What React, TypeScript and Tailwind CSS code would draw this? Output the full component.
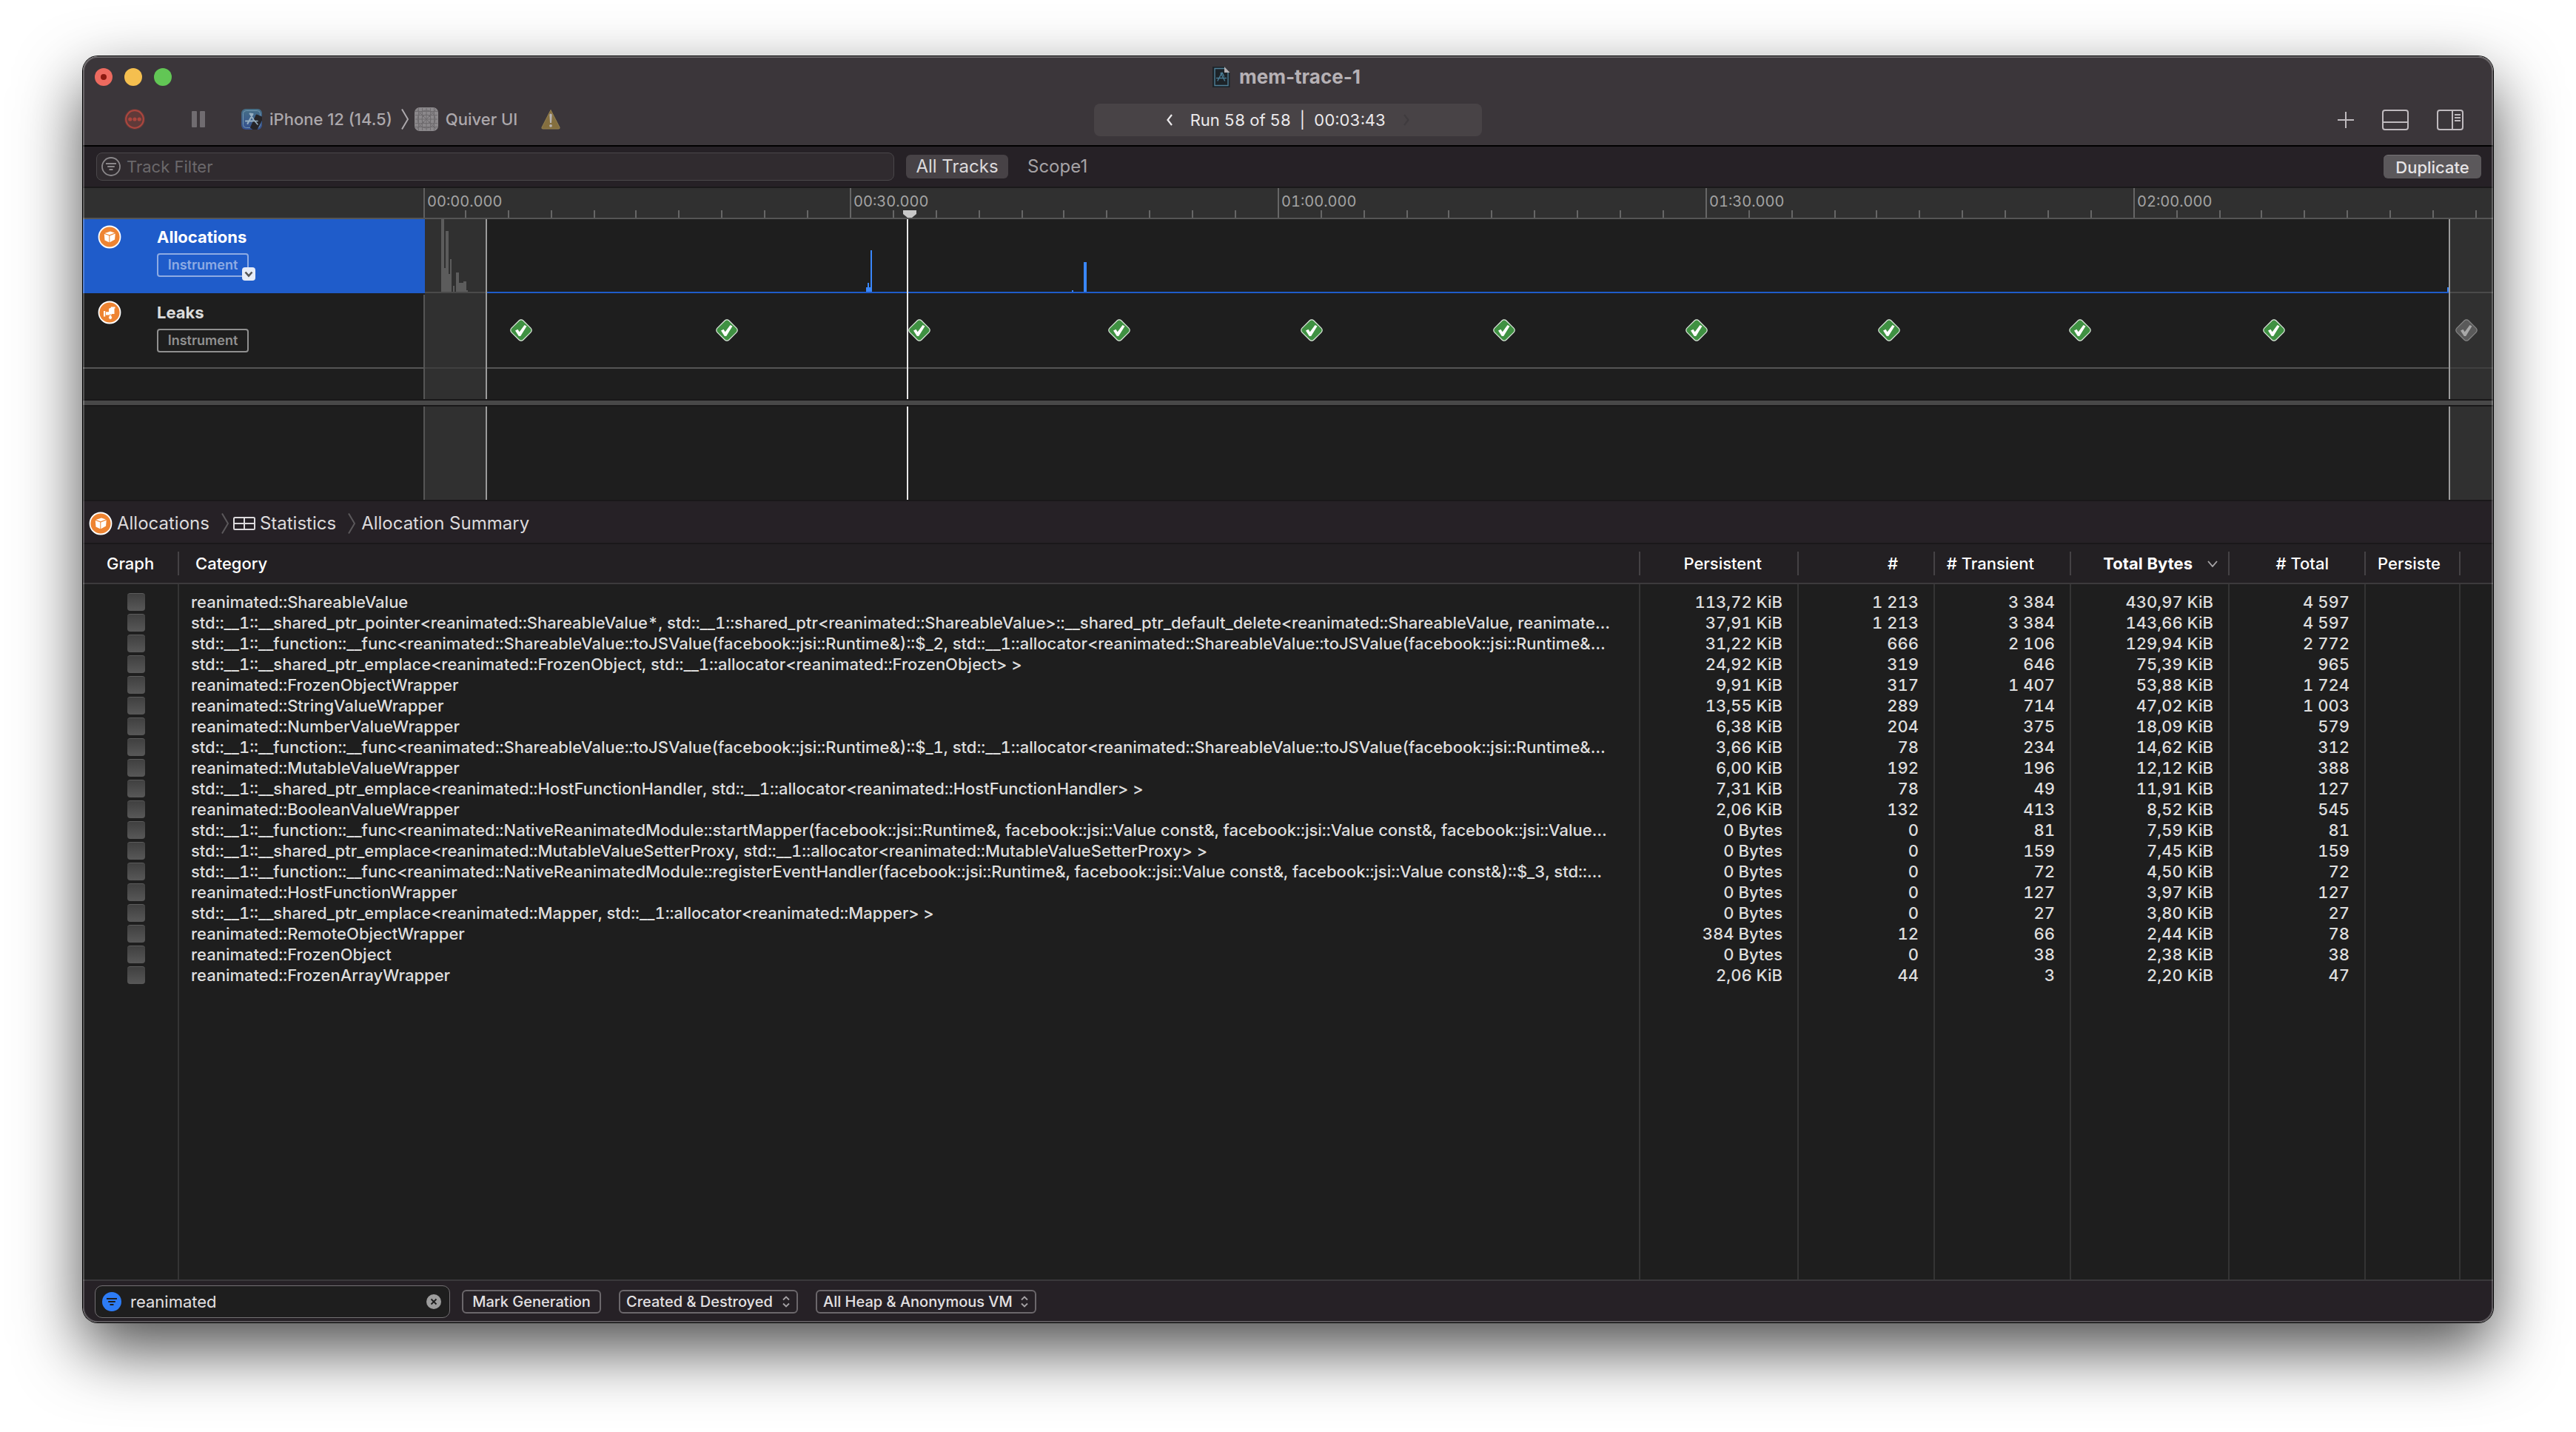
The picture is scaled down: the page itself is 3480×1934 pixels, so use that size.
import React from "react";

// timeline geometry: one tick every 3 seconds, origin at the left edge of the canvas
const TICK_WIDTH = 57.79;
const TICK_ORIGIN = -4;
const RANGE_START = 82;
const RANGE_END = 2734;

const ticks = Array.from({ length: 48 }, (_, i) => ({
  x: Math.round((TICK_ORIGIN + (i + 1) * TICK_WIDTH) / 2) * 2,
  major: (i + 1) % 10 === 0,
}));

const rulerLabels = [
  { x: 3, text: "00:00.000" },
  { x: 579, text: "00:30.000" },
  { x: 1157, text: "01:00.000" },
  { x: 1735, text: "01:30.000" },
  { x: 2313, text: "02:00.000" },
];

// [x, width, height]
const inactiveBars = [
  [22, 4, 98],
  [26, 2, 32],
  [28, 4, 82],
  [32, 2, 24],
  [34, 2, 44],
  [38, 2, 8],
  [42, 4, 26],
  [46, 6, 12],
  [52, 4, 14],
  [56, 2, 2],
];

const activeBars = [
  [596, 2, 6],
  [598, 2, 12],
  [600, 2, 6],
  [602, 2, 56],
  [874, 2, 2],
  [890, 4, 40],
  [2732, 2, 6],
];

const leakChecks = [130, 408, 668, 938, 1198, 1458, 1718, 1978, 2236, 2498];

const rows = [
  ["reanimated::ShareableValue", "113,72 KiB", "1 213", "3 384", "430,97 KiB", "4 597"],
  [
    "std::__1::__shared_ptr_pointer<reanimated::ShareableValue*, std::__1::shared_ptr<reanimated::ShareableValue>::__shared_ptr_default_delete<reanimated::ShareableValue, reanimate…",
    "37,91 KiB", "1 213", "3 384", "143,66 KiB", "4 597",
  ],
  [
    "std::__1::__function::__func<reanimated::ShareableValue::toJSValue(facebook::jsi::Runtime&)::$_2, std::__1::allocator<reanimated::ShareableValue::toJSValue(facebook::jsi::Runtime&…",
    "31,22 KiB", "666", "2 106", "129,94 KiB", "2 772",
  ],
  [
    "std::__1::__shared_ptr_emplace<reanimated::FrozenObject, std::__1::allocator<reanimated::FrozenObject> >",
    "24,92 KiB", "319", "646", "75,39 KiB", "965",
  ],
  ["reanimated::FrozenObjectWrapper", "9,91 KiB", "317", "1 407", "53,88 KiB", "1 724"],
  ["reanimated::StringValueWrapper", "13,55 KiB", "289", "714", "47,02 KiB", "1 003"],
  ["reanimated::NumberValueWrapper", "6,38 KiB", "204", "375", "18,09 KiB", "579"],
  [
    "std::__1::__function::__func<reanimated::ShareableValue::toJSValue(facebook::jsi::Runtime&)::$_1, std::__1::allocator<reanimated::ShareableValue::toJSValue(facebook::jsi::Runtime&…",
    "3,66 KiB", "78", "234", "14,62 KiB", "312",
  ],
  ["reanimated::MutableValueWrapper", "6,00 KiB", "192", "196", "12,12 KiB", "388"],
  [
    "std::__1::__shared_ptr_emplace<reanimated::HostFunctionHandler, std::__1::allocator<reanimated::HostFunctionHandler> >",
    "7,31 KiB", "78", "49", "11,91 KiB", "127",
  ],
  ["reanimated::BooleanValueWrapper", "2,06 KiB", "132", "413", "8,52 KiB", "545"],
  [
    "std::__1::__function::__func<reanimated::NativeReanimatedModule::startMapper(facebook::jsi::Runtime&, facebook::jsi::Value const&, facebook::jsi::Value const&, facebook::jsi::Value…",
    "0 Bytes", "0", "81", "7,59 KiB", "81",
  ],
  [
    "std::__1::__shared_ptr_emplace<reanimated::MutableValueSetterProxy, std::__1::allocator<reanimated::MutableValueSetterProxy> >",
    "0 Bytes", "0", "159", "7,45 KiB", "159",
  ],
  [
    "std::__1::__function::__func<reanimated::NativeReanimatedModule::registerEventHandler(facebook::jsi::Runtime&, facebook::jsi::Value const&, facebook::jsi::Value const&)::$_3, std::…",
    "0 Bytes", "0", "72", "4,50 KiB", "72",
  ],
  ["reanimated::HostFunctionWrapper", "0 Bytes", "0", "127", "3,97 KiB", "127"],
  [
    "std::__1::__shared_ptr_emplace<reanimated::Mapper, std::__1::allocator<reanimated::Mapper> >",
    "0 Bytes", "0", "27", "3,80 KiB", "27",
  ],
  ["reanimated::RemoteObjectWrapper", "384 Bytes", "12", "66", "2,44 KiB", "78"],
  ["reanimated::FrozenObject", "0 Bytes", "0", "38", "2,38 KiB", "38"],
  ["reanimated::FrozenArrayWrapper", "2,06 KiB", "44", "3", "2,20 KiB", "47"],
];

const TraceDocIcon = () => (
  <svg className="h-7 w-6" viewBox="0 0 24 28">
    <path d="M0 0h16.500l7 8v20H0z" fill="#1d2328" />
    <path d="M16 2.500H3v23h18V8" fill="none" stroke="#4f7f96" strokeWidth="1.400" />
    <path d="M16 0l7.500 8H16z" fill="#b5b2b5" />
    <path d="M12.500 8.500L7 19M11 8.500l5.500 10.500M5.500 15.500h13M13 8l2.500 5" fill="none" stroke="#4a7c94" strokeWidth="1.400" strokeLinecap="round" />
  </svg>
);

const SimulatorIcon = () => (
  <svg className="h-7 w-7" viewBox="0 0 28 28">
    <defs>
      <linearGradient id="sim" x1="0" y1="0" x2="0" y2="1">
        <stop offset="0" stopColor="#466f86" />
        <stop offset="1" stopColor="#344f8f" />
      </linearGradient>
    </defs>
    <rect width="28" height="28" rx="6" fill="url(#sim)" />
    <rect x="2.500" y="2.500" width="23" height="23" rx="4" fill="none" stroke="#7196b0" strokeWidth="1" />
    <path d="M12 7l3 5 5 8M15.500 7L8.500 20M6 16.500h16M11.500 6.500l4 .5" fill="none" stroke="#96afc2" strokeWidth="2" strokeLinecap="round" />
    <path d="M19.500 8.500q.7-1.300 2-.8L28 10.500v5L21.500 28h-6l-3.700-2.500z" fill="#252428" />
    <path d="M16.500 14.500l5.500 6.500M14 16.500h8" stroke="#96afc2" strokeWidth="1.600" strokeLinecap="round" />
  </svg>
);

const AppPlaceholderIcon = () => (
  <svg className="h-8 w-8" viewBox="0 0 32 32">
    <rect width="32" height="32" rx="7" fill="#8b888b" />
    <g fill="none" stroke="#6f6c6f" strokeWidth="1">
      <path d="M5.500 1v30M10.500 1v30M16 1v30M21.500 1v30M26.500 1v30M1 5.500h30M1 10.500h30M1 16h30M1 21.500h30M1 26.500h30M3 3l26 26M29 3L3 29" />
      <circle cx="16" cy="16" r="12" />
      <circle cx="16" cy="16" r="6" />
    </g>
  </svg>
);

const AllocationsIcon = () => (
  <svg className="h-8 w-8" viewBox="0 0 32 32">
    <circle cx="16" cy="16" r="14.500" fill="#ee8432" stroke="#fff" strokeWidth="1.800" />
    <path d="M17 8.500l6 2-7 2.700-6.500-2.200z" fill="#fff" />
    <path d="M8.800 12l6.500 2.200v9L9.500 20.500z" fill="#fff" />
    <path d="M23.700 11.500l-7.400 2.900v8.800l6.800-3.600z" fill="#fff" />
  </svg>
);

const LeaksIcon = () => (
  <svg className="h-8 w-8" viewBox="0 0 32 32">
    <circle cx="16" cy="16" r="14.500" fill="#ee8432" stroke="#fff" strokeWidth="1.800" />
    <path d="M8 14h2.200v7.500H8zM11 15.200h4V11h-.1l3-1.500V8.500h5.600v2h-1V18h-3.800v1.500H11z" fill="#fff" />
    <path d="M17 18.500c1.600 2 2.500 3.300 2.500 4.500a2.400 2.400 0 0 1-4.800 0c0-1.200.8-2.500 2.300-4.500z" fill="#fff" stroke="#ee8432" strokeWidth=".8" />
  </svg>
);

const FilterIcon = ({ active = false }: { active?: boolean }) => (
  <svg className="h-[26px] w-[26px] shrink-0" viewBox="0 0 26 26">
    {active ? (
      <circle cx="13" cy="13" r="13" fill="#2d7cf6" />
    ) : (
      <circle cx="13" cy="13" r="12" fill="none" stroke="#8a878a" strokeWidth="1.800" />
    )}
    <path d="M6 9h14M8.200 13h9.600M10.500 17h5" stroke={active ? "#1e1e1e" : "#8a878a"} strokeWidth="2" />
  </svg>
);

const Crumb = ({ className }: { className: string }) => (
  <svg className={className} viewBox="0 0 10 28">
    <path d="M1 0.500l8 13.500-8 13.500" fill="none" stroke="currentColor" strokeWidth="2" />
  </svg>
);

const UpDown = () => (
  <svg className="pointer-events-none absolute right-[10px] top-2 h-4 w-3" viewBox="0 0 12 16">
    <path d="M2 5.500L6 1.500l4 4M2 10.500l4 4 4-4" fill="none" stroke="#a5a2a5" strokeWidth="1.800" />
  </svg>
);

const LeakCheck = ({ x, inactive = false }: { x: number; inactive?: boolean }) => (
  <g transform={`translate(${x} 150)`}>
    <rect
      x="-11.200"
      y="-11.200"
      width="22.400"
      height="22.400"
      rx="4"
      transform="rotate(45)"
      fill={inactive ? "#5a5a5a" : "#3f9142"}
      stroke={inactive ? "#858585" : "#dfe8df"}
      strokeWidth="1.200"
    />
    <path d="M-8 .5l3.500-1.800 2.200 3.500L4.500-7l3 1.500L-.8 8h-2.400z" fill={inactive ? "#a8a8a8" : "#fff"} />
  </g>
);

const RangeShade = () => (
  <>
    <div className="absolute inset-y-0 left-0 w-[82px] bg-[#383838]/70" />
    <div className="absolute inset-y-0 left-[82px] w-0.5 bg-[#9a9a9a]" />
    <div className="absolute inset-y-0 left-[2734px] right-0 border-l-2 border-[#9a9a9a] bg-[#383838]/70" />
  </>
);

const HeaderCell = ({ children, className = "" }: { children?: React.ReactNode; className?: string }) => (
  <th className="h-[54px] border-b-2 border-[#3c3a3c] bg-[#232023] p-0 font-medium">
    <div className={`flex h-8 items-center overflow-hidden border-r-2 border-[#454245] whitespace-nowrap ${className}`}>
      {children}
    </div>
  </th>
);

const TitleBar = () => (
  <header className="border-b-2 border-black bg-[#3b363a]">
    <div className="grid h-14 grid-cols-[1fr_auto_1fr] items-center px-4">
      <div className="flex gap-4">
        <button aria-label="Close" className="flex size-6 items-center justify-center rounded-full bg-[#ed6a5f]">
          <span className="size-2 rounded-full bg-[#8c1a10]" />
        </button>
        <button aria-label="Minimize" className="size-6 rounded-full bg-[#f5bf4f]" />
        <button aria-label="Zoom" className="size-6 rounded-full bg-[#62c655]" />
      </div>
      <div className="flex items-center gap-3 pr-1">
        <TraceDocIcon />
        <h1 className="text-[26px] leading-8 font-bold text-[#b6b1b5]">mem-trace-1</h1>
      </div>
      <div />
    </div>

    <div className="grid h-16 grid-cols-[1fr_524px_1fr] items-center pb-1 text-[22px] leading-8">
      <div className="flex items-center pb-0.5 pl-14 text-[#aca8ac]">
        <button aria-label="Stop recording">
          <svg className="size-7" viewBox="0 0 28 28">
            <circle cx="14" cy="14" r="14" fill="#57393a" />
            <circle cx="14" cy="14" r="11.800" fill="#5f3a39" stroke="#ab463e" strokeWidth="2.200" />
            <circle cx="7.800" cy="14" r="2.600" fill="#ab463e" />
            <circle cx="14" cy="14" r="2.600" fill="#ab463e" />
            <circle cx="20.200" cy="14" r="2.600" fill="#ab463e" />
          </svg>
        </button>
        <button aria-label="Pause" className="ml-[63px] flex gap-1">
          <span className="h-[22px] w-[7px] rounded-[1px] bg-[#706c70]" />
          <span className="h-[22px] w-[7px] rounded-[1px] bg-[#706c70]" />
        </button>
        <button className="ml-[49px] flex items-center gap-[10px] font-medium">
          <SimulatorIcon />
          iPhone 12 (14.5)
        </button>
        <Crumb className="ml-3 h-7 w-[10px]" />
        <button className="ml-2 flex items-center gap-[10px] font-medium">
          <AppPlaceholderIcon />
          Quiver UI
        </button>
        <svg className="ml-8 h-7 w-[26px]" viewBox="0 0 26 28">
          <path d="M13 1.500L25 25a1.500 1.500 0 0 1-1.400 2H2.400A1.500 1.500 0 0 1 1 25z" fill="#856f3f" stroke="#94804e" strokeWidth="1" />
          <path d="M11.300 8q0-1.600 1.700-1.600T14.700 8l-.7 11h-2z" fill="#b8b4b4" />
          <circle cx="13" cy="22.800" r="1.900" fill="#b8b4b4" />
        </svg>
      </div>
      <div className="flex h-11 items-center justify-center gap-6 rounded-lg bg-[#484346] text-[#eceaec] tabular-nums">
        <button aria-label="Previous run">
          <svg className="h-4 w-2" viewBox="0 0 8 16">
            <path d="M7 1L1.500 8 7 15" fill="none" stroke="currentColor" strokeWidth="2.200" />
          </svg>
        </button>
        <span className="whitespace-pre">Run 58 of 58  |  00:03:43</span>
        <button aria-label="Next run" disabled className="text-[#3f3b3e]">
          <svg className="h-4 w-2" viewBox="0 0 8 16">
            <path d="M1 1l5.500 7L1 15" fill="none" stroke="currentColor" strokeWidth="2.200" />
          </svg>
        </button>
      </div>
      <div className="flex items-center justify-end gap-[38px] pr-10 text-[#bfbabe]">
        <button aria-label="Add instrument">
          <svg className="size-[22px]" viewBox="0 0 22 22">
            <path d="M11 0v22M0 11h22" stroke="currentColor" strokeWidth="2" />
          </svg>
        </button>
        <button aria-label="Toggle detail area">
          <svg className="h-7 w-9" viewBox="0 0 36 28">
            <rect x="1" y="1" width="34" height="26" rx="3" fill="none" stroke="currentColor" strokeWidth="2" />
            <path d="M1 17h34" stroke="currentColor" strokeWidth="2" />
          </svg>
        </button>
        <button aria-label="Toggle inspector">
          <svg className="h-7 w-9" viewBox="0 0 36 28">
            <rect x="1" y="1" width="34" height="26" rx="3" fill="none" stroke="currentColor" strokeWidth="2" />
            <path d="M21 1v26M24 7h8M24 11h8M24 15h8" stroke="currentColor" strokeWidth="2" />
          </svg>
        </button>
      </div>
    </div>
  </header>
);

const TrackFilterBar = () => (
  <div className="flex h-14 items-center border-b-2 border-[#1b191b] bg-[#262126] pr-4 pl-[18px] text-[24px] leading-8">
    <label className="flex h-[38px] w-[1078px] items-center gap-2 rounded-lg border border-[#4a474a] bg-[#302b2f] pl-[6px]">
      <FilterIcon />
      <input
        type="text"
        aria-label="Track Filter"
        placeholder="Track Filter"
        className="flex-1 bg-transparent text-[22px] outline-none placeholder:text-[#6b686b]"
      />
    </label>
    <button className="ml-4 h-8 w-[138px] rounded-md bg-[#474246] text-[#dcdadc]">All Tracks</button>
    <button className="ml-[26px] text-[#a5a2a5]">Scope1</button>
    <button className="ml-auto h-8 w-[132px] rounded-md border-t border-[#757275] bg-[#5b585b] text-[22px] leading-7 font-medium text-[#e6e4e6]">
      Duplicate
    </button>
  </div>
);

const Timeline = () => (
  <section>
    <div className="grid h-[42px] grid-cols-[462px_1fr] border-b-2 border-[#555] bg-[#303030]">
      <div className="border-r-2 border-[#5f5f5f]" />
      <div className="relative overflow-hidden text-[20px] leading-9 text-[#a3a3a3] tabular-nums">
        <svg className="absolute inset-0 h-full w-full">
          {ticks.map(({ x, major }) => (
            <rect key={x} x={x} y={major ? 0 : 30} width="2" height={major ? 40 : 10} fill="#666" />
          ))}
          <path d="M646 30h18v5l-6 5h-6l-6-5z" fill="#c8c8c8" />
        </svg>
        {rulerLabels.map(({ x, text }) => (
          <span key={text} className="absolute top-0" style={{ left: x }}>
            {text}
          </span>
        ))}
      </div>
    </div>

    <div className="grid h-[243px] grid-cols-[462px_1fr] bg-[#1e1e1e]">
      <div className="flex flex-col gap-0.5 text-[22px] leading-8 font-bold">
        <div className="flex h-[100px] items-start gap-12 bg-[#1f5cca] pt-2 pl-5 text-white">
          <AllocationsIcon />
          <div>
            <h2>Allocations</h2>
            <div className="relative mt-[6px] flex h-8 w-[124px] items-center justify-center rounded-sm border-2 border-[#8eabe3] text-[18px] font-semibold text-[#8eabe3]">
              Instrument
              <button
                aria-label="Choose detail"
                className="absolute -right-[11px] -bottom-[7px] flex size-[18px] items-center justify-center rounded bg-[#e6ebf7]"
              >
                <svg className="size-3" viewBox="0 0 12 12">
                  <path d="M1.500 3.500L6 8.500l4.500-5" fill="none" stroke="#555" strokeWidth="2.600" />
                </svg>
              </button>
            </div>
          </div>
        </div>
        <div className="flex h-[100px] items-start gap-12 border-r-2 border-b-2 border-[#555] pt-2 pl-5 text-[#dcdcdc]">
          <LeaksIcon />
          <div>
            <h2>Leaks</h2>
            <div className="mt-[6px] flex h-8 w-[124px] items-center justify-center rounded-sm border-2 border-[#909090] text-[18px] font-semibold text-[#909090]">
              Instrument
            </div>
          </div>
        </div>
        <div className="-mt-0.5 flex-1 border-r-2 border-[#555]" />
      </div>
      <div className="relative overflow-hidden">
        <div className="absolute inset-x-0 top-[200px] h-0.5 bg-[#555]" />
        <RangeShade />
        <svg className="absolute inset-0 h-full w-full">
          <rect x="0" y="98" width={RANGE_START} height="2" fill="#4a4a4a" />
          <rect x={RANGE_END + 2} y="98" width="100%" height="2" fill="#4a4a4a" />
          <rect x={RANGE_START + 2} y="98" width={RANGE_END - RANGE_START - 2} height="2" fill="#1f5cca" />
          {inactiveBars.map(([x, w, h]) => (
            <rect key={x} x={x} y={98 - h} width={w} height={h} fill="#5c5c5c" />
          ))}
          {activeBars.map(([x, w, h]) => (
            <rect key={x} x={x} y={98 - h} width={w} height={h} fill="#3a87fb" />
          ))}
          {leakChecks.map((x) => (
            <LeakCheck key={x} x={x} />
          ))}
          <LeakCheck x={2758} inactive />
        </svg>
        <div className="absolute inset-y-0 left-[651px] w-0.5 bg-[#e8e8e8]" />
      </div>
    </div>

    <div className="h-[10px] border-y-2 border-[#191819] bg-[#484848]" />

    <div className="grid h-32 grid-cols-[462px_1fr] border-b-2 border-[#1a181a] bg-[#1e1e1e]">
      <div className="border-r-2 border-[#555]" />
      <div className="relative overflow-hidden">
        <RangeShade />
        <div className="absolute inset-y-0 left-[651px] w-0.5 bg-[#e8e8e8]" />
      </div>
    </div>
  </section>
);

const Breadcrumbs = () => (
  <nav className="flex h-[58px] items-center border-b-2 border-[#1a181a] bg-[#262126] pt-1 pl-2 text-[24px] leading-8 text-[#dcdadc]">
    <a href="#allocations" className="flex items-center gap-[6px]">
      <AllocationsIcon />
      Allocations
    </a>
    <Crumb className="ml-4 h-7 w-[10px] text-[#5b585b]" />
    <a href="#statistics" className="ml-[6px] flex items-center gap-[6px]">
      <svg className="h-[18px] w-[30px]" viewBox="0 0 30 18">
        <rect x="1" y="1" width="28" height="16" rx="1.500" fill="none" stroke="currentColor" strokeWidth="2" />
        <path d="M15 1v16M1 9h28" stroke="currentColor" strokeWidth="2" />
      </svg>
      Statistics
    </a>
    <Crumb className="ml-4 h-7 w-[10px] text-[#5b585b]" />
    <a href="#summary" className="ml-2">
      Allocation Summary
    </a>
  </nav>
);

const AllocationsTable = () => (
  <div className="min-h-0 flex-1 overflow-hidden bg-[#1e1e1e]">
    <table className="h-full w-full table-fixed border-separate border-spacing-0 text-[22px] leading-7 font-medium text-[#dedede] tabular-nums">
      <colgroup>
        <col className="w-[130px]" />
        <col />
        <col className="w-[214px]" />
        <col className="w-[184px]" />
        <col className="w-[184px]" />
        <col className="w-[214px]" />
        <col className="w-[184px]" />
        <col className="w-[128px]" />
        <col className="w-[44px]" />
      </colgroup>
      <thead className="text-white">
        <tr>
          <HeaderCell className="pl-8">Graph</HeaderCell>
          <HeaderCell className="pl-[22px]">Category</HeaderCell>
          <HeaderCell className="justify-end pr-[48px]">Persistent</HeaderCell>
          <HeaderCell className="justify-end pr-[48px]">#</HeaderCell>
          <HeaderCell className="justify-end pr-[48px]"># Transient</HeaderCell>
          <HeaderCell className="justify-end gap-5 pr-[14px]">
            <span className="font-bold">Total Bytes</span>
            <svg className="h-[9px] w-[14px]" viewBox="0 0 14 9">
              <path d="M1 1l6 7 6-7" fill="none" stroke="#a8a5a8" strokeWidth="1.800" />
            </svg>
          </HeaderCell>
          <HeaderCell className="justify-end pr-[48px]"># Total</HeaderCell>
          <HeaderCell className="pl-4">Persiste</HeaderCell>
          <th className="border-b-2 border-[#3c3a3c] bg-[#232023]" />
        </tr>
      </thead>
      <tbody>
        <tr className="h-[10px]">
          {Array.from({ length: 8 }, (_, i) => (
            <td key={i} className="border-r-2 border-[#343434] p-0" />
          ))}
          <td className="p-0" />
        </tr>
        {rows.map(([category, ...values]) => (
          <tr key={category} className="h-7">
            <td className="border-r-2 border-[#343434] p-0 pl-[60px]">
              <input
                type="checkbox"
                aria-label={`Graph ${category}`}
                className="block size-6 appearance-none rounded border-t border-[#5c5c5c] bg-linear-to-b from-[#404040] to-[#585858]"
              />
            </td>
            <td className="overflow-hidden border-r-2 border-[#343434] p-0 pl-4 whitespace-nowrap">{category}</td>
            {values.map((value, i) => (
              <td key={i} className="border-r-2 border-[#343434] p-0 pr-5 text-right whitespace-nowrap">
                {value}
              </td>
            ))}
            <td className="border-r-2 border-[#343434] p-0" />
            <td className="p-0" />
          </tr>
        ))}
        {/* empty space under the last row keeps the column rules */}
        <tr>
          {Array.from({ length: 8 }, (_, i) => (
            <td key={i} className="border-r-2 border-[#343434] p-0" />
          ))}
          <td className="p-0" />
        </tr>
      </tbody>
    </table>
  </div>
);

const BottomBar = () => (
  <footer className="flex h-[58px] items-center border-t-2 border-[#3a383b] bg-[#262126] pl-4 text-[20px] leading-7 text-[#e2e0e2]">
    <label className="flex h-11 w-[480px] items-center gap-3 rounded-[10px] border border-[#737073] bg-[#1e1e1e] pr-[11px] pl-[9px]">
      <FilterIcon active />
      <input
        type="text"
        aria-label="Detail filter"
        defaultValue="reanimated"
        className="min-w-0 flex-1 bg-transparent text-[22px] outline-none"
      />
      <button aria-label="Clear filter">
        <svg className="size-5" viewBox="0 0 20 20">
          <circle cx="10" cy="10" r="10" fill="#9d9d9d" />
          <path d="M6.500 6.500l7 7M13.500 6.500l-7 7" stroke="#1e1e1e" strokeWidth="1.800" />
        </svg>
      </button>
    </label>
    <button className="ml-4 h-8 w-[188px] rounded-md border-2 border-[#6b676b] font-medium">Mark Generation</button>
    <div className="relative ml-6 h-8 w-[242px]">
      <select
        aria-label="Lifespan"
        className="block h-8 w-full appearance-none rounded-md border-2 border-[#6b676b] bg-transparent pl-2 font-medium"
      >
        <option>Created &amp; Destroyed</option>
      </select>
      <UpDown />
    </div>
    <div className="relative ml-6 h-8 w-[298px]">
      <select
        aria-label="Allocation type"
        className="block h-8 w-full appearance-none rounded-md border-2 border-[#6b676b] bg-transparent pl-2 font-medium"
      >
        <option>All Heap &amp; Anonymous VM</option>
      </select>
      <UpDown />
    </div>
  </footer>
);

export default function App() {
  return (
    <div className="flex h-screen flex-col bg-white px-28 pt-[76px] pb-[148px] font-['Inter',sans-serif]">
      <main className="relative flex min-h-0 flex-1 flex-col rounded-[20px] shadow-[0_0_0_1px_#000,0_36px_88px_rgba(0,0,0,0.7)]">
        <div className="flex min-h-0 flex-1 flex-col overflow-hidden rounded-[20px]">
          <TitleBar />
          <TrackFilterBar />
          <Timeline />
          <Breadcrumbs />
          <AllocationsTable />
          <BottomBar />
        </div>
        <div className="pointer-events-none absolute inset-0 rounded-[20px] border-2 border-white/25" />
      </main>
    </div>
  );
}
